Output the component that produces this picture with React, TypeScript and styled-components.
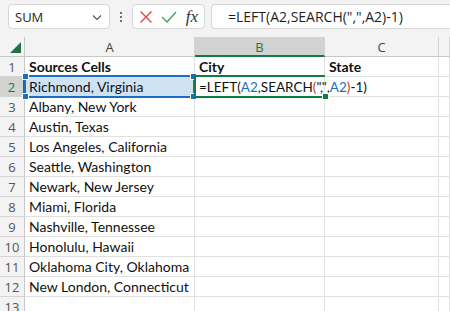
import React from "react";
import styled, { createGlobalStyle } from "styled-components";

const GlobalStyle = createGlobalStyle`
  html, body {
    margin: 0;
    padding: 0;
    background: #ffffff;
    overflow: hidden;
  }
  body {
    font-family: "Liberation Sans", Arial, sans-serif;
  }
`;

const Page = styled.div`
  width: 450px;
  height: 311px;
  display: flex;
  flex-direction: column;
  background: #ffffff;
`;

const Toolbar = styled.div`
  height: 37px;
  background: #f3f3f3;
  display: flex;
  align-items: center;
  padding: 0 0 0 8px;
  gap: 6px;
  box-sizing: border-box;
`;

const Box = styled.div<{ $w?: number; $grow?: boolean }>`
  height: 25px;
  box-sizing: border-box;
  background: #ffffff;
  border: 1px solid #d6d6d6;
  border-radius: 4px;
  display: flex;
  align-items: center;
  ${(p) => (p.$w ? `width: ${p.$w}px;` : "")}
  ${(p) => (p.$grow ? "flex: 1; border-right: none; border-radius: 4px 0 0 4px;" : "")}
  margin-top: -4px;
`;

const NameText = styled.span`
  flex: 1;
  padding-left: 6px;
  font-family: "Open Sans", "Noto Sans", sans-serif;
  font-size: 13px;
  color: #1f1f1f;
`;

const Dots = styled.div`
  width: 10px;
  display: flex;
  flex-direction: column;
  align-items: center;
  gap: 2px;
  margin-top: -4px;
  & > span {
    width: 2px;
    height: 2px;
    background: #444;
    border-radius: 1px;
  }
`;

const IconRow = styled.div`
  display: flex;
  align-items: center;
  justify-content: space-between;
  width: 100%;
  padding: 0 6px 0 6px;
  box-sizing: border-box;
`;

const Fx = styled.span`
  font-family: "Liberation Serif", "DejaVu Serif", serif;
  font-style: italic;
  font-size: 17px;
  color: #333;
  line-height: 1;
`;

const FormulaText = styled.span`
  padding-left: 16px;
  font-family: "Open Sans", "Noto Sans", sans-serif;
  font-size: 14px;
  color: #1f1f1f;
  white-space: nowrap;
`;

const Grid = styled.div`
  display: grid;
  grid-template-columns: 25px 170px 130px 114px 1fr;
  grid-auto-rows: 20px;
  align-content: start;
  flex: 1;
  overflow: hidden;
`;

const ColHead = styled.div<{ $active?: boolean }>`
  box-sizing: border-box;
  background: ${(p) => (p.$active ? "#d2d2d2" : "#f3f3f3")};
  border-right: 1px solid #d4d4d4;
  border-bottom: ${(p) => (p.$active ? "2px solid #107c41" : "1px solid #c8c8c8")};
  color: ${(p) => (p.$active ? "#107c41" : "#444")};
  font-family: "Open Sans", "Noto Sans", sans-serif;
  font-size: 13px;
  display: flex;
  align-items: center;
  justify-content: center;
  padding-top: 1px;
`;

const Corner = styled.div`
  box-sizing: border-box;
  background: #f3f3f3;
  border-right: 1px solid #c8c8c8;
  border-bottom: 1px solid #c8c8c8;
  display: flex;
  align-items: flex-end;
  justify-content: flex-end;
  padding: 0 3px 3px 0;
`;

const RowHead = styled.div<{ $active?: boolean }>`
  box-sizing: border-box;
  background: ${(p) => (p.$active ? "#d2d2d2" : "#f3f3f3")};
  border-right: ${(p) => (p.$active ? "2px solid #107c41" : "1px solid #c8c8c8")};
  border-bottom: 1px solid #d4d4d4;
  color: ${(p) => (p.$active ? "#107c41" : "#555")};
  font-family: "Open Sans", "Noto Sans", sans-serif;
  font-size: 13px;
  display: flex;
  align-items: center;
  justify-content: center;
`;

const Cell = styled.div<{ $bold?: boolean; $ref?: boolean; $edit?: boolean }>`
  position: relative;
  box-sizing: border-box;
  border-right: 1px solid #e1e1e1;
  border-bottom: 1px solid #e1e1e1;
  background: ${(p) => (p.$ref ? "#cfe2f4" : "#ffffff")};
  font-family: Lato, "Liberation Sans", Arial, sans-serif;
  font-size: ${(p) => (p.$edit ? "13.5px" : "14px")};
  font-weight: ${(p) => (p.$bold ? 700 : 400)};
  color: #111;
  padding: 0 4px;
  display: flex;
  align-items: center;
  white-space: nowrap;
  overflow: visible;
  z-index: ${(p) => (p.$ref || p.$edit ? 2 : 1)};
`;

const RefFrame = styled.div`
  position: absolute;
  left: -1px;
  top: -2px;
  right: -1px;
  bottom: -2px;
  border: 2px solid #1c6ec2;
  pointer-events: none;
`;

const EditFrame = styled.div`
  position: absolute;
  left: -1px;
  top: -2px;
  right: -1px;
  bottom: -2px;
  border: 2px solid #107c41;
  border-right: none;
  pointer-events: none;
`;

const Handle = styled.span<{ $c: string; $x: "l" | "r"; $y: "t" | "b" }>`
  position: absolute;
  width: 5px;
  height: 5px;
  background: ${(p) => p.$c};
  border: 1px solid #fff;
  ${(p) => (p.$x === "l" ? "left: -4px;" : "right: -4px;")}
  ${(p) => (p.$y === "t" ? "top: -4px;" : "bottom: -4px;")}
`;

const Tok = styled.span<{ $c?: string }>`
  color: ${(p) => p.$c || "#111"};
`;

const sources = [
  "Richmond, Virginia",
  "Albany, New York",
  "Austin, Texas",
  "Los Angeles, California",
  "Seattle, Washington",
  "Newark, New Jersey",
  "Miami, Florida",
  "Nashville, Tennessee",
  "Honolulu, Hawaii",
  "Oklahoma City, Oklahoma",
  "New London, Connecticut",
];

const BLUE = "#1c6ec2";
const RED = "#c0392b";

const App = () => {
  return (
    <Page>
      <GlobalStyle />
      <Toolbar>
        <Box $w={102}>
          <NameText>SUM</NameText>
          <svg width="12" height="12" viewBox="0 0 12 12" style={{ marginRight: 6 }}>
            <path d="M2 4.5 L6 8.5 L10 4.5" fill="none" stroke="#555" strokeWidth="1.2" />
          </svg>
        </Box>
        <Dots>
          <span />
          <span />
          <span />
        </Dots>
        <Box $w={73}>
          <IconRow>
            <svg width="14" height="14" viewBox="0 0 14 14">
              <path d="M1.5 1.5 L12.5 12.5 M12.5 1.5 L1.5 12.5" stroke="#e2443f" strokeWidth="1.4" fill="none" />
            </svg>
            <svg width="16" height="14" viewBox="0 0 16 14">
              <path d="M1 7 L6 12 L15 2" stroke="#3fa55a" strokeWidth="1.4" fill="none" />
            </svg>
            <Fx>fx</Fx>
          </IconRow>
        </Box>
        <Box $grow>
          <FormulaText>=LEFT(A2,SEARCH(",",A2)-1)</FormulaText>
        </Box>
      </Toolbar>
      <Grid>
        <Corner>
          <svg width="11" height="11" viewBox="0 0 11 11">
            <path d="M11 0 L11 11 L0 11 Z" fill="#217346" />
          </svg>
        </Corner>
        <ColHead>A</ColHead>
        <ColHead $active>B</ColHead>
        <ColHead>C</ColHead>
        <ColHead />

        <RowHead>1</RowHead>
        <Cell $bold>Sources Cells</Cell>
        <Cell $bold>City</Cell>
        <Cell $bold>State</Cell>
        <Cell />

        {sources.map((s, i) => {
          const row = i + 2;
          if (row === 2) {
            return (
              <React.Fragment key={row}>
                <RowHead $active>{row}</RowHead>
                <Cell $ref>
                  {s}
                  <RefFrame>
                    <Handle $c={BLUE} $x="l" $y="t" />
                    <Handle $c={BLUE} $x="r" $y="t" />
                    <Handle $c={BLUE} $x="l" $y="b" />
                    <Handle $c={BLUE} $x="r" $y="b" />
                  </RefFrame>
                </Cell>
                <Cell $edit>
                  <Tok>=LEFT(</Tok>
                  <Tok $c={BLUE}>A2</Tok>
                  <Tok>,SEARCH</Tok>
                  <Tok $c={RED}>(</Tok>
                  <Tok>","</Tok>
                  <Tok>,</Tok>
                  <Tok $c={BLUE}>A2</Tok>
                  <Tok $c={RED}>)</Tok>
                  <Tok>-1)</Tok>
                  <EditFrame>
                    <Handle $c="#107c41" $x="r" $y="b" />
                  </EditFrame>
                </Cell>
                <Cell />
                <Cell />
              </React.Fragment>
            );
          }
          return (
            <React.Fragment key={row}>
              <RowHead>{row}</RowHead>
              <Cell>{s}</Cell>
              <Cell />
              <Cell />
              <Cell />
            </React.Fragment>
          );
        })}
        <RowHead>13</RowHead>
        <Cell />
        <Cell />
        <Cell />
        <Cell />
      </Grid>
    </Page>
  );
};

export default App;
